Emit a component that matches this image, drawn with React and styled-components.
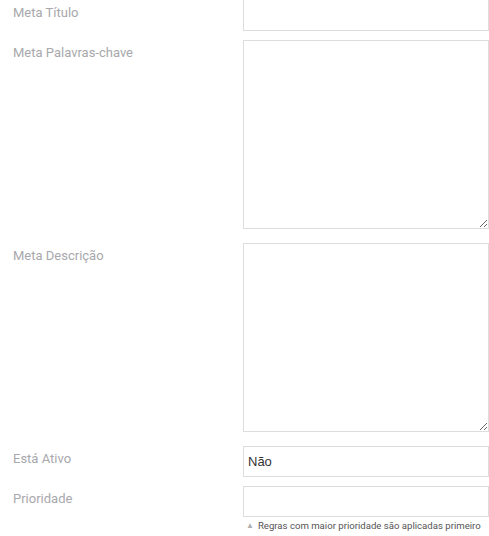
import React from "react";
import styled, { createGlobalStyle } from "styled-components";

const Global = createGlobalStyle`
  html, body { margin: 0; padding: 0; background: #fff; }
  body { font-family: Roboto, "Open Sans", Arial, sans-serif; }
  * { box-sizing: border-box; }
`;

const Form = styled.div`
  display: flex;
  flex-direction: column;
  padding-left: 13px;
`;

const Row = styled.div`
  display: grid;
  grid-template-columns: 230px 246px;
  margin-bottom: ${(p) => p.$gap}px;
`;

const Label = styled.label`
  font-size: 13px;
  line-height: 18px;
  color: #a8a8ac;
  padding-top: ${(p) => (p.$top ? 4 : 4)}px;
`;

const Field = styled.div`
  display: flex;
  flex-direction: column;
`;

const Input = styled.input`
  display: block;
  width: 246px;
  height: 31px;
  border: 1px solid #ddd;
  border-radius: 0;
  padding: 0 5px;
  font-family: Roboto, Arial, sans-serif;
  font-size: 13px;
  color: #333;
  outline: none;
  background: #fff;
`;

const TopInput = styled(Input)`
  border-top: none;
`;

const TextArea = styled.textarea`
  display: block;
  width: 246px;
  height: 189px;
  border: 1px solid #ddd;
  border-radius: 0;
  padding: 5px;
  font-family: Roboto, Arial, sans-serif;
  font-size: 13px;
  color: #333;
  outline: none;
  resize: vertical;
`;

const SelectBox = styled.div`
  width: 246px;
  height: 31px;
  border: 1px solid #ddd;
  display: flex;
  align-items: center;
  padding: 0 4px;
  font-family: "Liberation Sans", Arial, sans-serif;
  font-size: 13px;
  color: #333;
`;

const Help = styled.div`
  font-size: 9.6px;
  line-height: 12px;
  color: #555;
  margin-top: 3px;
  padding-left: 3px;
  display: flex;
  align-items: center;
  gap: 4px;
  white-space: nowrap;
`;

const Arrow = styled.span`
  color: #b0b0b0;
  font-size: 8px;
`;

export default function App() {
  return (
    <>
      <Global />
      <Form>
        <Row $gap={9}>
          <Label $top>Meta Título</Label>
          <Field>
            <TopInput />
          </Field>
        </Row>
        <Row $gap={14}>
          <Label>Meta Palavras-chave</Label>
          <Field>
            <TextArea />
          </Field>
        </Row>
        <Row $gap={14}>
          <Label>Meta Descrição</Label>
          <Field>
            <TextArea />
          </Field>
        </Row>
        <Row $gap={9}>
          <Label>Está Ativo</Label>
          <Field>
            <SelectBox>Não</SelectBox>
          </Field>
        </Row>
        <Row $gap={9}>
          <Label>Prioridade</Label>
          <Field>
            <Input />
            <Help>
              <Arrow>▲</Arrow>
              Regras com maior prioridade são aplicadas primeiro
            </Help>
          </Field>
        </Row>
      </Form>
    </>
  );
}
